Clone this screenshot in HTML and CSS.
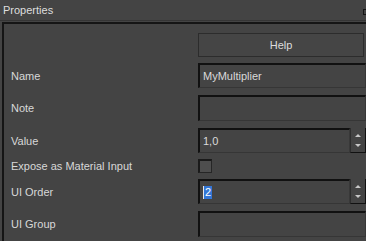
FILE: index.html
```html
<!DOCTYPE html>
<html lang="en">
<head>
  <meta charset="UTF-8" />
  <title>Properties</title>
  <link rel="stylesheet" href="styles.css">
</head>
<body>
  <div class="titlebar">
    <span class="title">Properties</span>
    <span class="grip"></span>
  </div>
  <div class="panel">
    <div class="row help-row">
      <span class="label"></span>
      <button class="help-btn">Help</button>
    </div>
    <div class="row name-row">
      <span class="label">Name</span>
      <div class="field"><span class="text">MyMultiplier</span></div>
    </div>
    <div class="row note-row">
      <span class="label">Note</span>
      <div class="field tall"></div>
    </div>
    <div class="row value-row">
      <span class="label">Value</span>
      <div class="field spin-field"><span class="text">1,0</span></div>
      <div class="spinner"><span class="up"></span><span class="down"></span></div>
    </div>
    <div class="row check-row">
      <span class="label">Expose as Material Input</span>
      <span class="checkbox"></span>
    </div>
    <div class="row order-row">
      <span class="label">UI Order</span>
      <div class="field spin-field"><span class="caret"></span><span class="selected">2</span></div>
      <div class="spinner"><span class="up"></span><span class="down"></span></div>
    </div>
    <div class="row group-row">
      <span class="label">UI Group</span>
      <div class="field tall"></div>
    </div>
  </div>
</body>
</html>
```

FILE: styles.css
```css
body {
  margin: 0;
  background-color: #444444;
  font-family: "Liberation Sans", Arial, sans-serif;
  font-size: 11px;
  color: #d8d8d8;
  height: 241px;
  overflow: hidden;
}

.titlebar {
  height: 20px;
  display: flex;
  justify-content: space-between;
  align-items: center;
  padding-left: 3px;
  border-bottom: 1px solid #353535;
}

.title {
  color: #dedede;
}

.grip {
  width: 2px;
  height: 4px;
  border: 1px solid #151515;
  border-right: none;
  margin-top: 4px;
}

.panel {
  margin: 1px 0 0 2px;
  border-top: 2px solid #151515;
  border-left: 2px solid #151515;
  padding: 9px 0 0 7px;
  height: 208px;
}

.row {
  display: flex;
  align-items: center;
}

.label {
  width: 187px;
  flex-shrink: 0;
}

.help-row { height: 24px; margin-bottom: 6px; }
.name-row { height: 25px; margin-bottom: 7px; }
.note-row { height: 26px; margin-bottom: 7px; }
.value-row { height: 25px; margin-bottom: 6px; }
.check-row { height: 14px; margin-bottom: 6px; }
.order-row { height: 25px; margin-bottom: 7px; }
.group-row { height: 26px; }

.help-btn {
  width: 166px;
  height: 24px;
  margin: 0;
  padding: 0;
  background-color: #454545;
  border: 1px solid #2c2c2c;
  color: #dcdcdc;
  font-family: inherit;
  font-size: 11px;
}

.field {
  box-sizing: border-box;
  width: 168px;
  height: 25px;
  background-color: #444444;
  border-top: 2px solid #111111;
  border-left: 2px solid #111111;
  border-right: 1px solid #383838;
  border-bottom: 1px solid #363636;
  display: flex;
  align-items: center;
  padding-left: 3px;
}

.field.tall {
  height: 26px;
}

.spin-field {
  width: 152px;
}

.text {
  color: #dadada;
}

.spinner {
  box-sizing: border-box;
  width: 16px;
  height: 25px;
  border-left: 1px solid #2e2e2e;
  border-right: 1px solid #111111;
  border-bottom: 1px solid #111111;
  display: flex;
  flex-direction: column;
  align-items: center;
  justify-content: space-between;
  padding: 6px 0 5px;
}

.up, .down {
  width: 0;
  height: 0;
  border-left: 3px solid transparent;
  border-right: 3px solid transparent;
}

.up {
  border-bottom: 3px solid #c8c8c8;
}

.down {
  border-top: 3px solid #c8c8c8;
}

.checkbox {
  box-sizing: border-box;
  width: 14px;
  height: 14px;
  background-color: #4e4e4e;
  border: 1px solid #262626;
  border-top: 2px solid #1a1a1a;
  border-left: 2px solid #1a1a1a;
}

.caret {
  width: 1px;
  height: 13px;
  background-color: #e8e8e8;
}

.selected {
  background-color: #3376d6;
  color: #ffffff;
  height: 13px;
  line-height: 13px;
  padding: 0 1px;
}
```
